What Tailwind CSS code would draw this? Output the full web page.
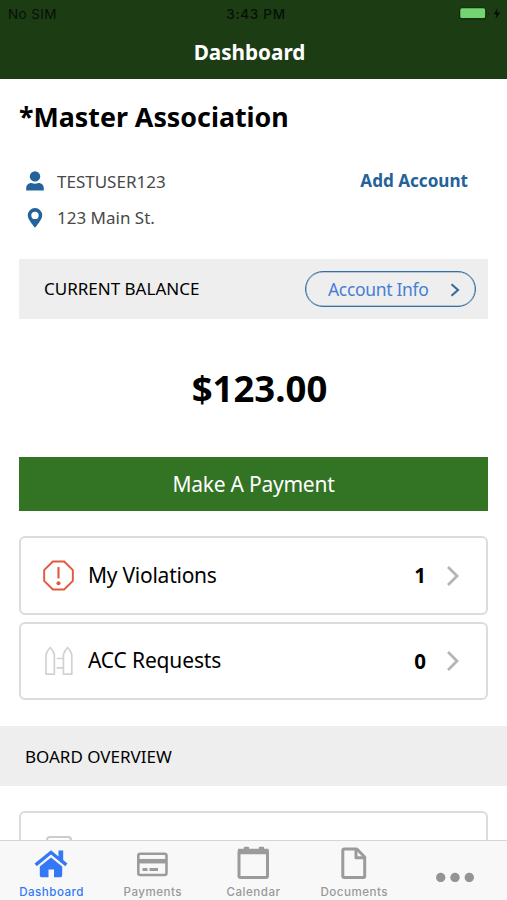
<!DOCTYPE html>
<html lang="en">
<head>
<meta charset="utf-8">
<title>Dashboard</title>
<script src="https://cdn.jsdelivr.net/npm/@tailwindcss/browser@4"></script>
</head>
<body class="bg-white">
<div class="flex h-[900px] w-[507px] flex-col overflow-hidden bg-white font-['Noto_Sans',sans-serif] whitespace-nowrap text-black">
  <header class="h-[79px] shrink-0 bg-[#1c3c14]">
    <div class="grid h-7 grid-cols-3 items-center pr-[6px] pl-[8px] font-['Inter',sans-serif] text-[13.500px] text-[#071005]">
      <span class="tracking-[0.400px]">No SIM</span>
      <span class="pl-[3px] text-center font-medium tracking-[0.700px]">3:43 PM</span>
      <svg class="justify-self-end" width="42" height="14" viewBox="0 0 42 14">
        <rect x="0.5" y="1" width="26.500" height="11" rx="2.5" fill="none" stroke="#12290d"/>
        <rect x="1.300" y="1.300" width="24.800" height="9.800" rx="1.5" fill="#72d572"/>
        <path d="M29 4.500v4q2-2 0-4" fill="#12290d"/>
        <path d="M38.7 1L34.500 7.300h3l-1 4.700 4.800-6.500h-3.200z" fill="#071005"/>
      </svg>
    </div>
    <h1 class="pt-[10px] pr-2 text-center text-[20.700px] leading-7 font-bold text-white">Dashboard</h1>
  </header>

  <main class="flex min-h-0 flex-1 flex-col">
    <section class="px-[19px]">
      <h2 class="mt-[20px] h-[35px] text-[26.800px] leading-[35px] font-bold">*Master Association</h2>
      <div class="mt-[34px] flex h-[26px] items-center pr-5 pl-[7px]">
        <svg width="18" height="20" viewBox="0 0 18 20" fill="#23629a"><circle cx="9" cy="5.4" r="5.2"/><path d="M.2 19.5v-2.300c0-3.200 2.200-5.300 5.200-5.300q3.600 1.500 7.200 0c3 0 5.200 2.100 5.200 5.300v2.300z"/></svg>
        <span class="ml-[13px] pt-px text-[17px] text-[#484848]">TESTUSER123</span>
        <span class="ml-auto text-[17.100px] font-bold text-[#23629a]">Add Account</span>
      </div>
      <div class="mt-[11px] flex h-[26px] items-center pl-[8px]">
        <svg width="16" height="20" viewBox="0 0 16 20"><path fill="#23629a" fill-rule="evenodd" d="M8 0a7.200 7.200 0 0 0-7.200 7.300C.8 11 4.600 15.500 8 19.800c3.400-4.300 7.200-8.800 7.200-12.500A7.200 7.200 0 0 0 8 0zm0 3.700a3.700 3.700 0 1 1 0 7.400a3.700 3.700 0 0 1 0-7.400z"/></svg>
        <span class="ml-[14px] text-[17px] text-[#484848]">123 Main St.</span>
      </div>
      <div class="mt-[28px] flex h-[60px] items-center bg-[#eeeeee] pr-[12px] pl-[25px]">
        <span class="text-[17px]">CURRENT BALANCE</span>
        <div class="ml-auto flex h-[36px] w-[171px] items-center rounded-full border-[1px] border-[#346f9f] pl-[22px] ring-[0.500px] ring-[#346f9f]/60 ring-inset">
          <span class="text-[17.500px] tracking-[-0.330px] text-[#477ed5]">Account Info</span>
          <svg class="mt-[2px] ml-[22px]" width="10" height="14" viewBox="0 0 10 14" fill="none" stroke="#346b9d" stroke-width="2.100"><path d="M1.500 1.200L8 7l-6.500 5.800"/></svg>
        </div>
      </div>
      <div class="flex h-[138px] items-center justify-center pl-3 text-[36.500px] font-bold">$123.00</div>
      <div class="flex h-[54px] items-center justify-center bg-[#337324] pt-px text-[21px] tracking-[-0.250px] text-white">Make A Payment</div>
      <div class="mt-[25px] flex h-[79px] items-center rounded-[6px] border-2 border-[#dcdcdc] pr-[26px] pl-[22px]">
        <svg class="mt-[-1px]" width="31" height="31" viewBox="0 0 32 32" fill="none" stroke="#e4583f" stroke-width="2"><path d="M10.200 1.500h11.600l9 9v11l-9 9H10.200l-9-9v-11z"/><path d="M16 7.300v11.700" stroke-width="2.200"/><circle cx="16" cy="24" r="2.100" fill="#e4583f" stroke="none"/></svg>
        <span class="ml-[14px] text-[21px] tracking-[-0.250px]">My Violations</span>
        <span class="ml-auto text-[20.500px] font-bold">1</span>
        <svg class="ml-[20px]" width="14" height="22" viewBox="0 0 14 22" fill="none" stroke="#b5b5b5" stroke-width="2.800"><path d="M2 2l9 9-9 9"/></svg>
      </div>
      <div class="mt-[7px] flex h-[78px] items-center rounded-[6px] border-2 border-[#dcdcdc] pr-[26px] pl-[22px]">
        <svg width="32" height="32" viewBox="0 0 32 32" fill="none" stroke="#d2d2d2" stroke-width="1.700" stroke-linejoin="round"><path d="M3 29.200V9.500Q4 6 7.200 2.500Q10.400 6 11.400 9.500v19.700zM20.400 29.200V9.500Q21.400 6 24.600 2.500Q27.800 6 28.800 9.500v19.700zM13.600 13.500h6.800M13.600 22.800h6.800"/></svg>
        <span class="ml-[13px] text-[21px] tracking-[-0.150px]">ACC Requests</span>
        <span class="ml-auto text-[20.500px] font-bold">0</span>
        <svg class="ml-[20px]" width="14" height="22" viewBox="0 0 14 22" fill="none" stroke="#b5b5b5" stroke-width="2.800"><path d="M2 2l9 9-9 9"/></svg>
      </div>
    </section>
    <div class="mt-[26px] flex h-[60px] shrink-0 items-center bg-[#eeeeee] pt-px pl-[25px] text-[17px]">BOARD OVERVIEW</div>
    <div class="mx-[19px] mt-[25px] h-[29px] shrink-0 rounded-t-[6px] border-2 border-b-0 border-[#dcdcdc] pt-[23px] pl-[25px]">
      <div class="h-[4px] w-[26px] rounded-t-[4px] border-2 border-b-0 border-[#cccccc]"></div>
    </div>
  </main>

  <nav class="grid h-[60px] shrink-0 grid-cols-5 border-t border-[#d5d5d5] bg-[#f8f8f8] pr-[1px] font-['Inter',sans-serif] text-[11.600px] leading-[18px] font-medium text-[#989898]">
    <div class="flex flex-col items-center pt-[5px] text-[#3478f6]">
      <svg width="34" height="36" viewBox="0 0 34 36" fill="currentColor"><path d="M17 4.200L.600 17.500l2.100 2.700L17 8.500l14.300 11.700 2.100-2.700-4.200-3.400V4.500h-4.700v6z"/><path d="M17 11.400l11.200 9v9.100q0 1.800-1.800 1.800H20v-7.800h-5.500v7.800H7.600q-1.800 0-1.800-1.800v-9.100z"/></svg>
      <span class="mt-px pl-[2px] tracking-[0.480px]">Dashboard</span>
    </div>
    <div class="flex flex-col items-center pt-[5px]">
      <svg width="34" height="36" viewBox="0 0 34 36" fill="none" stroke="#9b9b9b"><rect x="3.300" y="7.800" width="28.200" height="21.200" rx="2" stroke-width="2.600"/><path d="M3 15.200h28.500" stroke-width="4.500"/><path d="M7.500 23.500h5M14.500 23.500h8.500" stroke-width="3"/></svg>
      <span class="mt-px pl-[2px] tracking-[0.480px]">Payments</span>
    </div>
    <div class="flex flex-col items-center pt-[5px]">
      <svg width="34" height="36" viewBox="0 0 34 36" fill="none" stroke="#9b9b9b"><rect x="3" y="4.500" width="28.500" height="27" rx="1.500" stroke-width="3"/><path d="M2 5.500h30.500" stroke-width="5.500"/><path d="M9 2h3M24 2h3" stroke-width="2.500" stroke-linecap="round"/></svg>
      <span class="mt-px pl-px tracking-[0.480px]">Calendar</span>
    </div>
    <div class="flex flex-col items-center pt-[5px]">
      <svg width="34" height="36" viewBox="0 0 34 36" fill="none" stroke="#9b9b9b" stroke-width="3" stroke-linejoin="round"><path d="M7.300 3h12.500l7.900 8v19.300q0 1.200-1.200 1.200H7.300q-1.500 0-1.500-1.500V4.500Q5.800 3 7.300 3z"/><path d="M19 3.500v8.200h8.500"/></svg>
      <span class="mt-px tracking-[0.480px]">Documents</span>
    </div>
    <div class="flex justify-center pt-[31px]">
      <svg width="40" height="10" viewBox="0 0 40 10" fill="#949494"><circle cx="5.700" cy="5.500" r="4.700"/><circle cx="20" cy="5.500" r="4.700"/><circle cx="34.300" cy="5.500" r="4.700"/></svg>
    </div>
  </nav>
</div>
</body>
</html>
